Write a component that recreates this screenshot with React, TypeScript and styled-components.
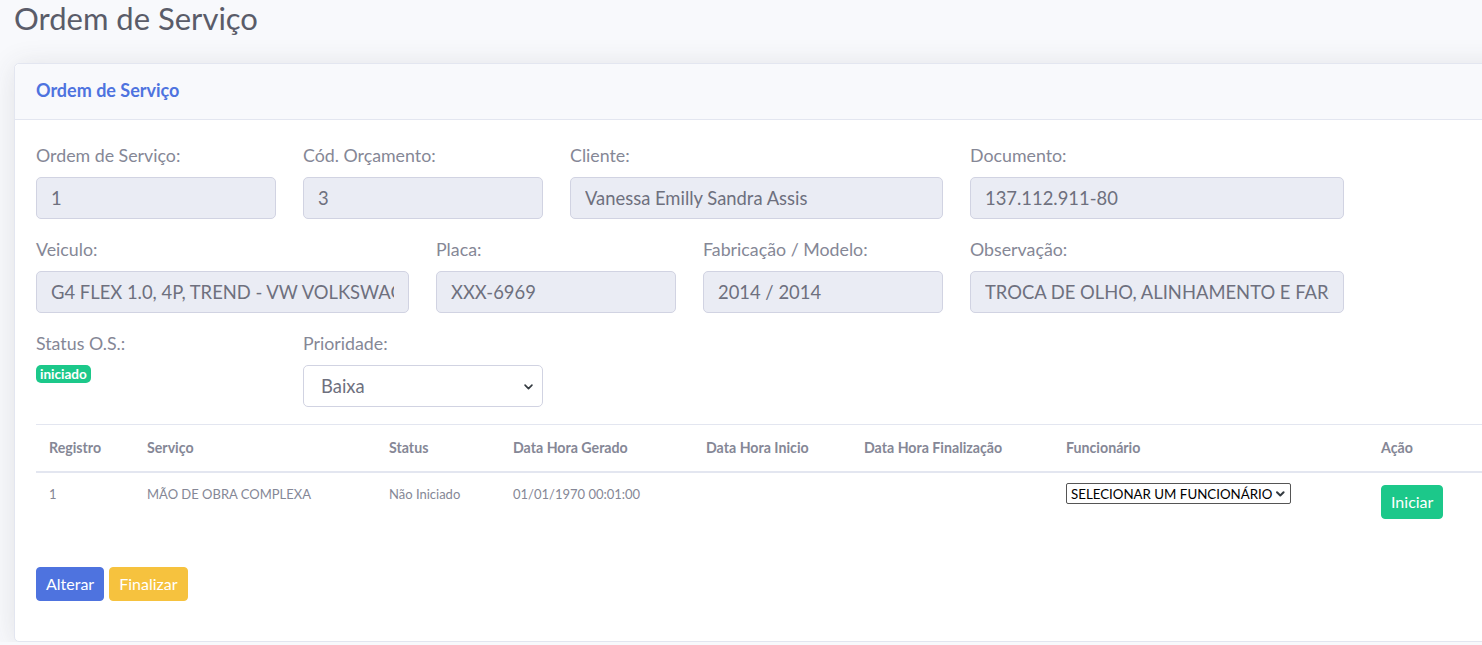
import React from "react";
import styled, { createGlobalStyle } from "styled-components";

const Global = createGlobalStyle`
  html, body { margin: 0; padding: 0; background: #f8f9fc; overflow: hidden; }
  body { font-family: Lato, "Noto Sans", sans-serif; color: #858796; }
  * { box-sizing: border-box; }
`;

const Page = styled.div`
  width: 1700px;
  padding: 0 0 0 14px;
`;

const Heading = styled.h1`
  margin: 0 0 27px 0;
  padding-top: 1px;
  font-size: 31px;
  line-height: 35px;
  font-weight: 400;
  color: #5a5c69;
`;

const Card = styled.div`
  background: #fff;
  border: 1px solid #e3e6f0;
  border-radius: 5px;
  box-shadow: 0 2px 28px 0 rgba(58, 59, 69, 0.12);
  width: 1660px;
`;

const CardHeader = styled.div`
  background: #f8f9fc;
  border-bottom: 1px solid #e3e6f0;
  padding: 0 21px 4px 21px;
  height: 56px;
  display: flex;
  align-items: center;
  border-radius: 5px 5px 0 0;
`;

const CardTitle = styled.h6`
  margin: 0;
  font-size: 18px;
  font-weight: 700;
  color: #4e73df;
`;

const CardBody = styled.div`
  padding: 23px 21px 40px 21px;
`;

const FormRow = styled.div`
  display: flex;
  gap: 27px;
  margin-bottom: 18px;
`;

const Field = styled.div<{ $w: number }>`
  width: ${(p) => p.$w}px;
  display: flex;
  flex-direction: column;
`;

const Label = styled.label`
  font-size: 17.8px;
  line-height: 24px;
  margin-bottom: 10px;
  color: #858796;
`;

const Input = styled.div`
  height: 42px;
  background: #eaecf4;
  border: 1px solid #d1d3e2;
  border-radius: 5px;
  padding: 0 14px;
  display: flex;
  align-items: center;
  font-size: 18.4px;
  color: #6e707e;
`;

const Value = styled.span`
  flex: 1;
  white-space: nowrap;
  overflow: hidden;
`;

const SelectBox = styled.div`
  height: 42px;
  background: #fff;
  border: 1px solid #d1d3e2;
  border-radius: 5px;
  padding: 0 8px 0 17px;
  display: flex;
  align-items: center;
  justify-content: space-between;
  font-size: 18.4px;
  color: #6e707e;
`;

const Badge = styled.span`
  align-self: flex-start;
  background: #1cc88a;
  color: #fff;
  font-size: 13.5px;
  font-weight: 700;
  line-height: 18px;
  padding: 0 4px;
  border-radius: 5px;
`;

const Table = styled.table`
  width: 1640px;
  border-collapse: collapse;
  table-layout: fixed;
  margin-top: -1px;
  margin-bottom: 36px;
`;

const Th = styled.th`
  text-align: left;
  font-size: 14.2px;
  font-weight: 700;
  color: #858796;
  padding: 0 12px 0 13px;
  height: 47px;
  border-top: 1px solid #e3e6f0;
  border-bottom: 2px solid #e3e6f0;
  vertical-align: middle;
`;

const Td = styled.td`
  font-size: 13px;
  color: #858796;
  padding: 13px 12px 12px 13px;
  vertical-align: top;
  line-height: 16px;
`;

const NativeSelect = styled.div`
  display: inline-flex;
  align-items: center;
  gap: 3px;
  height: 21px;
  width: 225px;
  border: 1px solid #555;
  border-radius: 2px;
  padding: 0 4px;
  font-size: 13.3px;
  color: #000;
  background: #fff;
  margin-top: -3px;
  white-space: nowrap;
`;

const Button = styled.button<{ $bg: string }>`
  background: ${(p) => p.$bg};
  border: 1px solid ${(p) => p.$bg};
  color: #fff;
  font-family: inherit;
  font-size: 16px;
  height: 34px;
  padding: 0 9px;
  border-radius: 4px;
  cursor: pointer;
`;

const ActionButton = styled(Button)`
  margin-top: -1px;
`;

const ButtonRow = styled.div`
  display: flex;
  gap: 5px;
`;

const Chevron = ({ size, stroke }: { size: number; stroke: number }) => (
  <svg width={size} height={size} viewBox="0 0 16 16">
    <path d="M3 6l5 5 5-5" fill="none" stroke="#343a40" strokeWidth={stroke} strokeLinecap="round" strokeLinejoin="round" />
  </svg>
);

const cols = [98, 242, 124, 193, 158, 202, 315, 308];

export default function App() {
  return (
    <>
      <Global />
      <Page>
        <Heading>Ordem de Serviço</Heading>
        <Card>
          <CardHeader>
            <CardTitle>Ordem de Serviço</CardTitle>
          </CardHeader>
          <CardBody>
            <FormRow>
              <Field $w={240}>
                <Label>Ordem de Serviço:</Label>
                <Input><Value>1</Value></Input>
              </Field>
              <Field $w={240}>
                <Label>Cód. Orçamento:</Label>
                <Input><Value>3</Value></Input>
              </Field>
              <Field $w={373}>
                <Label>Cliente:</Label>
                <Input><Value>Vanessa Emilly Sandra Assis</Value></Input>
              </Field>
              <Field $w={374}>
                <Label>Documento:</Label>
                <Input><Value>137.112.911-80</Value></Input>
              </Field>
            </FormRow>
            <FormRow>
              <Field $w={373}>
                <Label>Veiculo:</Label>
                <Input><Value>G4 FLEX 1.0, 4P, TREND - VW VOLKSWAGEN</Value></Input>
              </Field>
              <Field $w={240}>
                <Label>Placa:</Label>
                <Input><Value>XXX-6969</Value></Input>
              </Field>
              <Field $w={240}>
                <Label>Fabricação / Modelo:</Label>
                <Input><Value>2014 / 2014</Value></Input>
              </Field>
              <Field $w={374}>
                <Label>Observação:</Label>
                <Input><Value>TROCA DE OLHO, ALINHAMENTO E FAROL</Value></Input>
              </Field>
            </FormRow>
            <FormRow>
              <Field $w={240}>
                <Label>Status O.S.:</Label>
                <Badge>iniciado</Badge>
              </Field>
              <Field $w={240}>
                <Label>Prioridade:</Label>
                <SelectBox>
                  Baixa
                  <Chevron size={11} stroke={2.4} />
                </SelectBox>
              </Field>
            </FormRow>
            <Table>
              <colgroup>
                {cols.map((w, i) => (
                  <col key={i} style={{ width: w }} />
                ))}
              </colgroup>
              <thead>
                <tr>
                  <Th>Registro</Th>
                  <Th>Serviço</Th>
                  <Th>Status</Th>
                  <Th>Data Hora Gerado</Th>
                  <Th>Data Hora Inicio</Th>
                  <Th>Data Hora Finalização</Th>
                  <Th>Funcionário</Th>
                  <Th>Ação</Th>
                </tr>
              </thead>
              <tbody>
                <tr>
                  <Td>1</Td>
                  <Td>MÃO DE OBRA COMPLEXA</Td>
                  <Td>Não Iniciado</Td>
                  <Td>01/01/1970 00:01:00</Td>
                  <Td></Td>
                  <Td></Td>
                  <Td>
                    <NativeSelect>
                      SELECIONAR UM FUNCIONÁRIO
                      <Chevron size={11} stroke={3} />
                    </NativeSelect>
                  </Td>
                  <Td>
                    <ActionButton $bg="#1cc88a">Iniciar</ActionButton>
                  </Td>
                </tr>
              </tbody>
            </Table>
            <ButtonRow>
              <Button $bg="#4e73df">Alterar</Button>
              <Button $bg="#f6c23e">Finalizar</Button>
            </ButtonRow>
          </CardBody>
        </Card>
      </Page>
    </>
  );
}
